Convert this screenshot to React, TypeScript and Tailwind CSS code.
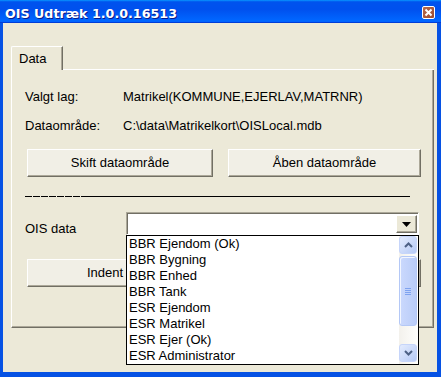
import React from "react";

const items = [
  "BBR Ejendom (Ok)",
  "BBR Bygning",
  "BBR Enhed",
  "BBR Tank",
  "ESR Ejendom",
  "ESR Matrikel",
  "ESR Ejer (Ok)",
  "ESR Administrator",
];

function Chevron({ up }: { up?: boolean }) {
  return (
    <svg width="9" height="6" viewBox="0 0 9 6">
      {up ? (
        <path d="M1 5 L4.5 1.5 L8 5" fill="none" stroke="#4D6185" strokeWidth="2" />
      ) : (
        <path d="M1 1 L4.5 4.5 L8 1" fill="none" stroke="#4D6185" strokeWidth="2" />
      )}
    </svg>
  );
}

function Button({ className, children }: { className?: string; children?: React.ReactNode }) {
  return (
    <div
      className={
        "h-[28px] flex items-center bg-[#F1EFE6] border-t border-l border-t-white border-l-white border-b border-r border-b-[#716F64] border-r-[#716F64] shadow-[inset_-1px_-1px_0_#ACA899] " +
        (className ?? "")
      }
    >
      {children}
    </div>
  );
}

export default function App() {
  return (
    <div className="w-[441px] h-[377px] flex flex-col bg-[#0652E4] font-['Liberation_Sans',Arial,sans-serif] text-[13px] text-black overflow-hidden">
      {/* Title bar */}
      <div className="h-[23px] shrink-0 flex items-start pl-[5px] pr-[6px] bg-[linear-gradient(180deg,#0997ff,#0053ee_8%,#0050ee_40%,#0066ff_88%,#0066ff_93%,#005bff_95%,#003dd7_96%,#003dd7)]">
        <span className="mt-[8px] font-['DejaVu_Sans',sans-serif] font-bold text-[12.7px] leading-[12px] text-white [text-shadow:1px_1px_0_#0A1A8A]">
          OIS Udtræk 1.0.0.16513
        </span>
        <div className="ml-auto mt-[6px] w-[13px] h-[13px] rounded-[2px] border border-white bg-[linear-gradient(135deg,#B86A4C,#9A4A30)] flex items-center justify-center">
          <svg width="9" height="9" viewBox="0 0 9 9">
            <path d="M1.5 1.5 L7.5 7.5 M7.5 1.5 L1.5 7.5" stroke="white" strokeWidth="2" />
          </svg>
        </div>
      </div>

      {/* Body */}
      <div className="flex-1 ml-[3px] mr-[4px] mb-[5px] bg-[#ECE9D8] pt-[23px] pl-[8px] pr-[3px]">
        {/* Tab header */}
        <div className="flex h-[24px]">
          <div className="w-[52px] h-full border-t border-l border-white border-r border-r-[#716F64] shadow-[inset_-1px_0_0_#ACA899] rounded-tl-[2px] pl-[7px] pt-[4px] leading-[16px]">
            Data
          </div>
          <div className="flex-1 h-full border-b border-white" />
        </div>
        {/* Panel */}
        <div className="h-[258px] border-l border-white border-r border-r-[#716F64] border-b border-b-[#716F64] shadow-[inset_-1px_-1px_0_#ACA899] pl-[13px] pt-[19px]">
          <div className="flex h-[16px] leading-[16px]">
            <div className="w-[98px]">Valgt lag:</div>
            <div>Matrikel(KOMMUNE,EJERLAV,MATRNR)</div>
          </div>
          <div className="flex h-[16px] leading-[16px] mt-[13px]">
            <div className="w-[98px]">Dataområde:</div>
            <div>C:\data\Matrikelkort\OISLocal.mdb</div>
          </div>
          <div className="flex gap-[15px] ml-[2px] mt-[15px]">
            <Button className="w-[186px] justify-center">Skift dataområde</Button>
            <Button className="w-[193px] justify-center">Åben dataområde</Button>
          </div>
          <div className="flex mt-[19px] h-px">
            <div className="w-[56px] h-px bg-[repeating-linear-gradient(90deg,#000_0_7px,transparent_7px_8px)]" />
            <div className="w-[329px] h-px bg-black" />
          </div>
          <div className="flex mt-[15px]">
            <div className="w-[101px] pt-[9px] leading-[16px]">OIS data</div>
            <div className="relative w-[293px] h-[23px]">
              <div className="w-full h-full border-t border-l border-t-[#ACA899] border-l-[#ACA899] border-b border-r border-b-white border-r-white shadow-[inset_1px_1px_0_#716F64] bg-white flex justify-end p-[1px] pl-[2px] pt-[2px]">
                <div className="w-[21px] h-full bg-[#ECE9D8] border-t border-l border-t-white border-l-white border-b border-r border-b-[#716F64] border-r-[#716F64] shadow-[inset_-1px_-1px_0_#ACA899] flex items-center justify-center">
                  <svg width="9" height="5" viewBox="0 0 9 5">
                    <path d="M0 0 H9 L4.5 5 Z" fill="black" />
                  </svg>
                </div>
              </div>
              {/* Drop-down list */}
              <div className="absolute top-[23px] left-0 w-[293px] h-[130px] border border-black bg-white z-10">
                <div className="relative w-full h-full">
                  {items.map((it) => (
                    <div key={it} className="h-[16px] leading-[16px] pl-[2px] whitespace-nowrap">
                      {it}
                    </div>
                  ))}
                  <div className="absolute top-0 bottom-0 right-[1px] w-[18px] flex flex-col bg-[linear-gradient(90deg,#F3F1EC,#FEFEFB)]">
                    <div className="h-[18px] rounded-[3px] border border-[#C6D5FA] bg-[linear-gradient(135deg,#E4ECFE,#B6CAF6)] flex items-center justify-center">
                      <Chevron up />
                    </div>
                    <div className="mt-[2px] h-[70px] rounded-[3px] border border-[#B4C8F6] bg-[linear-gradient(90deg,#CBD9FD,#B9CCF8)] shadow-[inset_1px_1px_0_#F2F6FF] flex flex-col items-center justify-center gap-[1px]">
                      <div className="w-[6px] h-px bg-[#7FA3F0]" />
                      <div className="w-[6px] h-px bg-[#7FA3F0]" />
                      <div className="w-[6px] h-px bg-[#7FA3F0]" />
                      <div className="w-[6px] h-px bg-[#7FA3F0]" />
                    </div>
                    <div className="flex-1" />
                    <div className="h-[18px] mb-[2px] rounded-[3px] border border-[#C6D5FA] bg-[linear-gradient(135deg,#E4ECFE,#B6CAF6)] flex items-center justify-center">
                      <Chevron />
                    </div>
                  </div>
                </div>
              </div>
            </div>
          </div>
          <Button className="w-[394px] ml-[2px] mt-[22px] pl-[59px]">Indent</Button>
        </div>
      </div>
    </div>
  );
}
